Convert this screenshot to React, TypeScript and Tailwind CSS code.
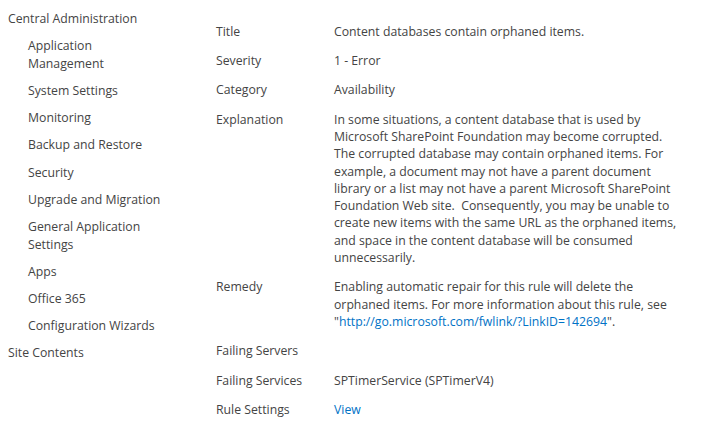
import React from "react";

const navItems: { label: React.ReactNode; sub?: boolean }[] = [
  { label: "Central Administration" },
  { label: <>Application<br />Management</>, sub: true },
  { label: "System Settings", sub: true },
  { label: "Monitoring", sub: true },
  { label: "Backup and Restore", sub: true },
  { label: "Security", sub: true },
  { label: "Upgrade and Migration", sub: true },
  { label: <>General Application<br />Settings</>, sub: true },
  { label: "Apps", sub: true },
  { label: "Office 365", sub: true },
  { label: "Configuration Wizards", sub: true },
  { label: "Site Contents" },
];

const explanation = [
  "In some situations, a content database that is used by",
  "Microsoft SharePoint Foundation may become corrupted.",
  "The corrupted database may contain orphaned items. For",
  "example, a document may not have a parent document",
  "library or a list may not have a parent Microsoft SharePoint",
  "Foundation Web site.\u00a0 Consequently, you may be unable to",
  "create new items with the same URL as the orphaned items,",
  "and space in the content database will be consumed",
  "unnecessarily.",
];

function Lines({ lines }: { lines: string[] }) {
  return (
    <>
      {lines.map((l, i) => (
        <div key={i} className="whitespace-nowrap">
          {l}
        </div>
      ))}
    </>
  );
}

export default function App() {
  const rows: { label: string; value: React.ReactNode }[] = [
    { label: "Title", value: "Content databases contain orphaned items." },
    { label: "Severity", value: "1 - Error" },
    { label: "Category", value: "Availability" },
    { label: "Explanation", value: <Lines lines={explanation} /> },
    {
      label: "Remedy",
      value: (
        <>
          <div className="whitespace-nowrap">Enabling automatic repair for this rule will delete the</div>
          <div className="whitespace-nowrap">orphaned items. For more information about this rule, see</div>
          <div className="whitespace-nowrap">
            "<a className="text-[#0072c6]" href="#">http://go.microsoft.com/fwlink/?LinkID=142694</a>".
          </div>
        </>
      ),
    },
    { label: "Failing Servers", value: "" },
    { label: "Failing Services", value: "SPTimerService (SPTimerV4)" },
    { label: "Rule Settings", value: <a className="text-[#0072c6]" href="#">View</a> },
  ];

  return (
    <div
      className="flex w-[702px] h-[427px] bg-white text-[#444] text-[12.25px] overflow-hidden"
      style={{ fontFamily: '"Open Sans", "Noto Sans", sans-serif' }}
    >
      {/* quick launch */}
      <nav className="w-[216px] shrink-0 pl-2 pt-[5.5px]">
        <ul>
          {navItems.map((item, i) => (
            <li key={i} className={`py-[4.55px] leading-[18px] ${item.sub ? "pl-5" : ""}`}>
              {item.label}
            </li>
          ))}
        </ul>
      </nav>

      {/* rule details */}
      <table className="self-start mt-[16.5px] border-collapse">
        <tbody>
          {rows.map((r) => (
            <tr key={r.label} className="align-top leading-[17.25px]">
              <td className="w-[118px] py-[6.1px] whitespace-nowrap">{r.label}</td>
              <td className="py-[6.1px]">{r.value}</td>
            </tr>
          ))}
        </tbody>
      </table>
    </div>
  );
}
